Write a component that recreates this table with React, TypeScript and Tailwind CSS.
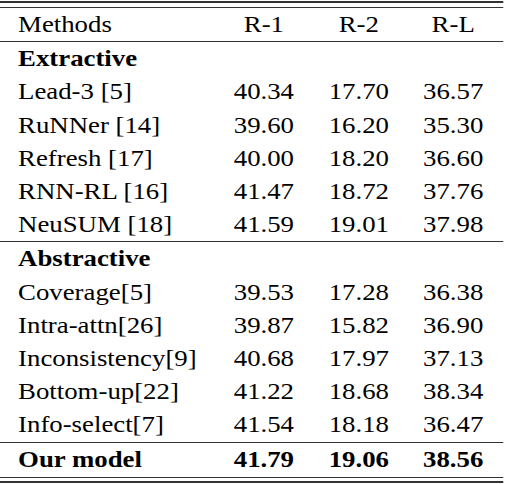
import React from "react";

type Row = { name: string; r1: string; r2: string; rl: string };

const extractive: Row[] = [
  { name: "Lead-3 [5]", r1: "40.34", r2: "17.70", rl: "36.57" },
  { name: "RuNNer [14]", r1: "39.60", r2: "16.20", rl: "35.30" },
  { name: "Refresh [17]", r1: "40.00", r2: "18.20", rl: "36.60" },
  { name: "RNN-RL [16]", r1: "41.47", r2: "18.72", rl: "37.76" },
  { name: "NeuSUM [18]", r1: "41.59", r2: "19.01", rl: "37.98" },
];

const abstractive: Row[] = [
  { name: "Coverage[5]", r1: "39.53", r2: "17.28", rl: "36.38" },
  { name: "Intra-attn[26]", r1: "39.87", r2: "15.82", rl: "36.90" },
  { name: "Inconsistency[9]", r1: "40.68", r2: "17.97", rl: "37.13" },
  { name: "Bottom-up[22]", r1: "41.22", r2: "18.68", rl: "38.34" },
  { name: "Info-select[7]", r1: "41.54", r2: "18.18", rl: "36.47" },
];

function DataRow({ row, bold = false }: { row: Row; bold?: boolean }) {
  return (
    <div className={`grid grid-cols-[183px_87px_76px_86px] leading-[33.2px] ${bold ? "font-bold" : ""}`}>
      <div className="pl-[15.5px] whitespace-nowrap">{row.name}</div>
      <div className="text-center">{row.r1}</div>
      <div className="text-center">{row.r2}</div>
      <div className="text-center">{row.rl}</div>
    </div>
  );
}

function SectionTitle({ title }: { title: string }) {
  return (
    <div className="leading-[33.2px] font-bold pl-[15.5px]">{title}</div>
  );
}

export default function App() {
  return (
    <div className="w-[506px] h-[484px] bg-white overflow-hidden font-['Liberation_Serif','Times_New_Roman',serif]">
      <div className="w-[432px] origin-left scale-x-[1.165] text-[23px] text-black">
        <div className="mt-px border-t-2 border-[#333]" />
        <div className="mt-[4px] border-t border-[#333]" />
        <div className="grid grid-cols-[183px_87px_76px_86px] leading-[33.2px]">
          <div className="pl-[15.5px]">Methods</div>
          <div className="text-center">R-1</div>
          <div className="text-center">R-2</div>
          <div className="text-center">R-L</div>
        </div>
        <div className="border-t border-[#333]" />
        <SectionTitle title="Extractive" />
        {extractive.map((r) => (
          <DataRow key={r.name} row={r} />
        ))}
        <div className="border-t border-[#333]" />
        <SectionTitle title="Abstractive" />
        {abstractive.map((r) => (
          <DataRow key={r.name} row={r} />
        ))}
        <div className="border-t border-[#333]" />
        <DataRow row={{ name: "Our model", r1: "41.79", r2: "19.06", rl: "38.56" }} bold />
        <div className="mt-px border-t border-[#333]" />
        <div className="mt-[3px] border-t-2 border-[#333]" />
      </div>
    </div>
  );
}
